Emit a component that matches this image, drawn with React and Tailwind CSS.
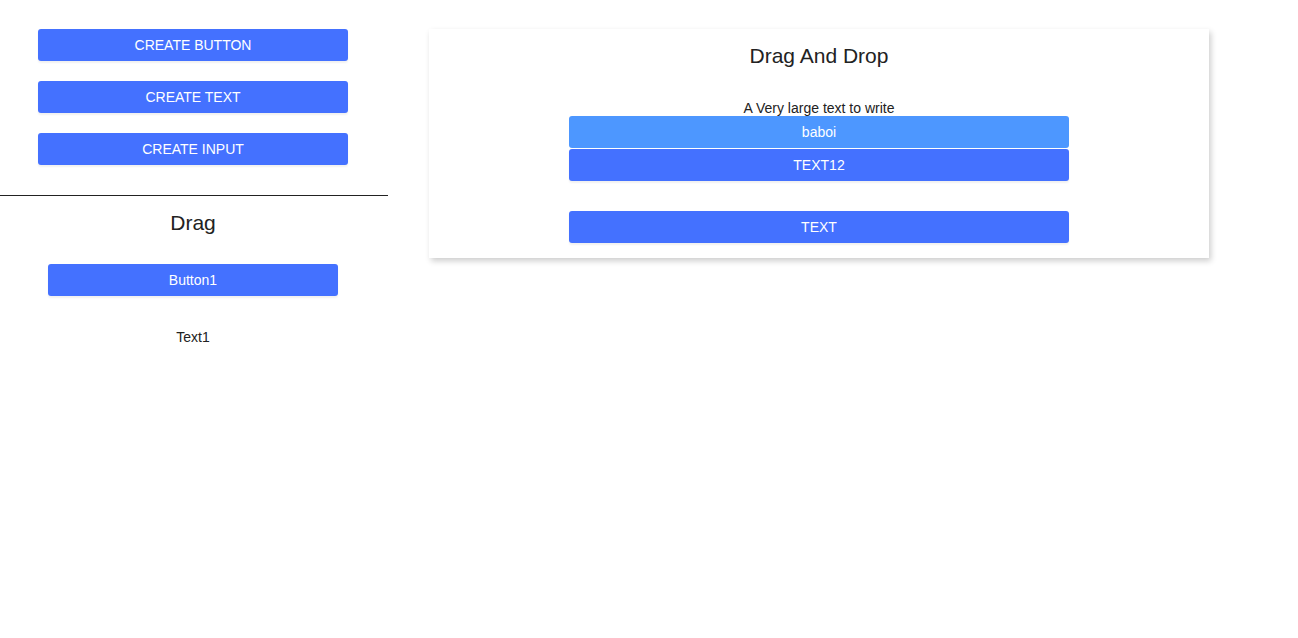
import React from 'react';

const btn =
  'h-8 w-full rounded-[3px] bg-[#4471ff] text-[14px] text-white shadow-[0_2px_2px_rgba(0,0,0,0.06)]';

const App = () => {
  return (
    <div className="flex min-h-[638px] bg-white font-['Liberation_Sans',Arial,sans-serif] text-[#222]">
      <div className="w-[388px] shrink-0">
        <div className="flex flex-col gap-5 pl-[38px] pr-[40px] pt-[29px]">
          <button className={btn}>CREATE BUTTON</button>
          <button className={btn}>CREATE TEXT</button>
          <button className={btn}>CREATE INPUT</button>
        </div>
        <div className="mt-[30px] border-t border-[#222] pr-[2px]">
          <h2 className="mt-[13px] text-center text-[21px] leading-7">Drag</h2>
          <div className="mt-[27px] pl-[48px] pr-[48px]">
            <button className={btn}>Button1</button>
          </div>
          <p className="mt-[31px] text-center text-[14px] leading-5">Text1</p>
        </div>
      </div>

      <div className="ml-[41px] mt-[29px] h-fit w-[780px] bg-white pb-[15px] pt-[13px] shadow-[2px_3px_6px_rgba(0,0,0,0.2)]">
        <h1 className="text-center text-[21px] leading-7">Drag And Drop</h1>
        <div className="mx-auto mt-[30px] flex w-[500px] flex-col">
          <p className="text-center text-[14px] leading-4">A Very large text to write</p>
          <button className="h-8 w-full rounded-[3px] bg-[#4d97ff] text-[14px] text-white">baboi</button>
          <button className={`${btn} mt-px`}>TEXT12</button>
          <button className={`${btn} mt-[30px]`}>TEXT</button>
        </div>
      </div>
    </div>
  );
};

export default App;
